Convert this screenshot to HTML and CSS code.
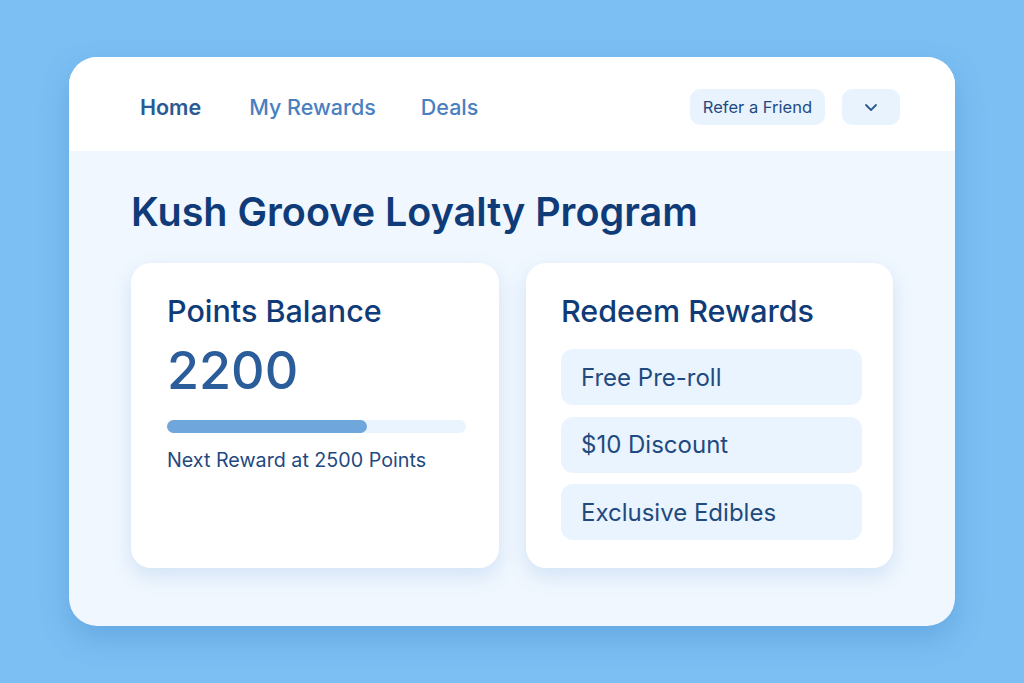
FILE: index.html
```html
<!DOCTYPE html>
<html lang="en">
<head>
<meta charset="utf-8">
<title>Kush Groove Loyalty Program</title>
<link rel="stylesheet" href="styles.css">
</head>
<body>
<div class="window">
  <header class="topbar">
    <nav class="nav">
      <a class="nav-link active">Home</a>
      <a class="nav-link">My Rewards</a>
      <a class="nav-link">Deals</a>
    </nav>
    <div class="actions">
      <button class="pill">Refer a Friend</button>
      <button class="pill chevron" aria-label="More">
        <svg width="14" height="9" viewBox="0 0 14 9"><path d="M2 2 L7 7 L12 2" fill="none" stroke="#2a5a94" stroke-width="1.8" stroke-linecap="round" stroke-linejoin="round"/></svg>
      </button>
    </div>
  </header>
  <main class="content">
    <h1 class="title">Kush Groove Loyalty Program</h1>
    <div class="cards">
      <section class="card card-points">
        <h2 class="card-title">Points Balance</h2>
        <div class="points">2200</div>
        <div class="progress"><div class="progress-fill" style="width:66.9%"></div></div>
        <p class="next">Next Reward at 2500 Points</p>
      </section>
      <section class="card card-redeem">
        <h2 class="card-title">Redeem Rewards</h2>
        <ul class="rewards">
          <li class="reward">Free Pre-roll</li>
          <li class="reward">$10 Discount</li>
          <li class="reward">Exclusive Edibles</li>
        </ul>
      </section>
    </div>
  </main>
</div>
</body>
</html>
```
FILE: styles.css
```css
* { box-sizing: border-box; }
html, body { margin: 0; padding: 0; }
body {
  background: #7bbff3;
  font-family: Inter, "Noto Sans", sans-serif;
  padding: 57px 69px;
  height: 683px;
}
.window {
  height: 569px;
  background: #f0f7fe;
  border-radius: 28px;
  overflow: hidden;
  box-shadow: 0 12px 30px rgba(40, 100, 170, 0.25);
  display: flex;
  flex-direction: column;
}
.topbar {
  height: 94px;
  background: #ffffff;
  display: flex;
  align-items: center;
  justify-content: space-between;
  padding: 6px 55px 0 71px;
}
.nav { display: flex; gap: 45px; }
.nav-link {
  font-size: 21.5px;
  font-weight: 500;
  color: #4a80bf;
}
.nav-link.active { color: #2a5a94; font-weight: 600; margin-right: 3px; }
.actions { display: flex; gap: 17px; }
.pill {
  height: 36px;
  border: none;
  border-radius: 10px;
  background: #e8f3fe;
  color: #1f4a7f;
  font-family: inherit;
  font-size: 16.5px;
  padding: 0 13px;
}
.chevron { width: 58px; display: flex; align-items: center; justify-content: center; }
.content { padding: 38px 62px 0 62px; }
.title {
  margin: 0;
  font-size: 39.5px;
  font-weight: 600;
  color: #0f3c78;
  line-height: 46px;
}
.cards {
  display: flex;
  gap: 27px;
  margin-top: 28px;
}
.card {
  height: 305px;
  background: #ffffff;
  border-radius: 20px;
  box-shadow: 0 8px 20px rgba(80, 140, 210, 0.18);
}
.card-points { width: 368px; padding: 30px 32px 0 36px; }
.card-redeem { width: 367px; padding: 30px 31px 0 35px; }
.card-title {
  margin: 0;
  font-size: 30.5px;
  font-weight: 500;
  color: #0f3c78;
  line-height: 36px;
}
.points {
  font-size: 52px;
  font-weight: 500;
  color: #2a5d9a;
  line-height: 62px;
  margin-top: 11px;
}
.progress {
  margin-top: 18px;
  height: 13px;
  border-radius: 7px;
  background: #eaf4fe;
  width: 299px;
}
.progress-fill { height: 100%; border-radius: 7px; background: #6fa6dc; }
.next {
  margin: 15px 0 0;
  font-size: 19.7px;
  line-height: 24px;
  color: #1f4a7f;
}
.rewards {
  list-style: none;
  margin: 20px 0 0;
  padding: 0;
  display: flex;
  flex-direction: column;
  gap: 11.5px;
}
.reward {
  height: 56px;
  border-radius: 12px;
  background: #eaf4fe;
  display: flex;
  align-items: center;
  padding: 0 20px;
  font-size: 24px;
  color: #1f4a7f;
}
```
